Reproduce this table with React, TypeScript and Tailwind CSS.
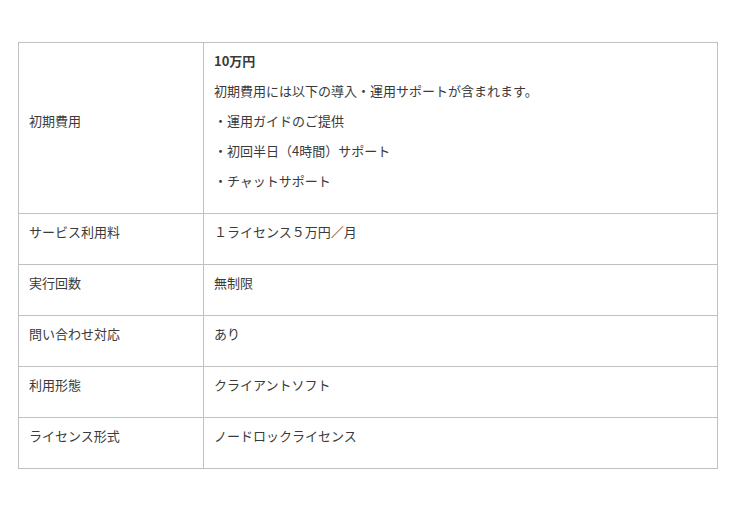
const rows: { label: string; values: string[] }[] = [
  { label: 'サービス利用料', values: ['１ライセンス５万円／月'] },
  { label: '実行回数', values: ['無制限'] },
  { label: '問い合わせ対応', values: ['あり'] },
  { label: '利用形態', values: ['クライアントソフト'] },
  { label: 'ライセンス形式', values: ['ノードロックライセンス'] },
];

const initial = [
  '初期費用には以下の導入・運用サポートが含まれます。',
  '・運用ガイドのご提供',
  '・初回半日（4時間）サポート',
  '・チャットサポート',
];

export default function App() {
  return (
    <div className="min-h-[509px] bg-white px-[18px] pt-[42px] font-['Noto_Sans_CJK_JP',sans-serif] text-[13px] text-[#3a3a3a]">
      <table className="w-[700px] border-collapse">
        <tbody>
          <tr>
            <th className="w-[185px] border border-[#c0c0c0] px-[10px] pt-[9px] pb-[11px] text-left align-middle font-normal">
              <p className="mb-[12px] leading-[18px]">初期費用</p>
            </th>
            <td className="border border-[#c0c0c0] px-[10px] pt-[9px] pb-[11px] align-top">
              <p className="mb-[12px] font-bold leading-[18px]">10万円</p>
              {initial.map(line => (
                <p key={line} className="mb-[12px] leading-[18px]">{line}</p>
              ))}
            </td>
          </tr>
          {rows.map(row => (
            <tr key={row.label}>
              <th className="border border-[#c0c0c0] px-[10px] pt-[9px] pb-[11px] text-left align-top font-normal">
                <p className="mb-[12px] leading-[18px]">{row.label}</p>
              </th>
              <td className="border border-[#c0c0c0] px-[10px] pt-[9px] pb-[11px] align-top">
                {row.values.map(v => (
                  <p key={v} className="mb-[12px] leading-[18px]">{v}</p>
                ))}
              </td>
            </tr>
          ))}
        </tbody>
      </table>
    </div>
  );
}
